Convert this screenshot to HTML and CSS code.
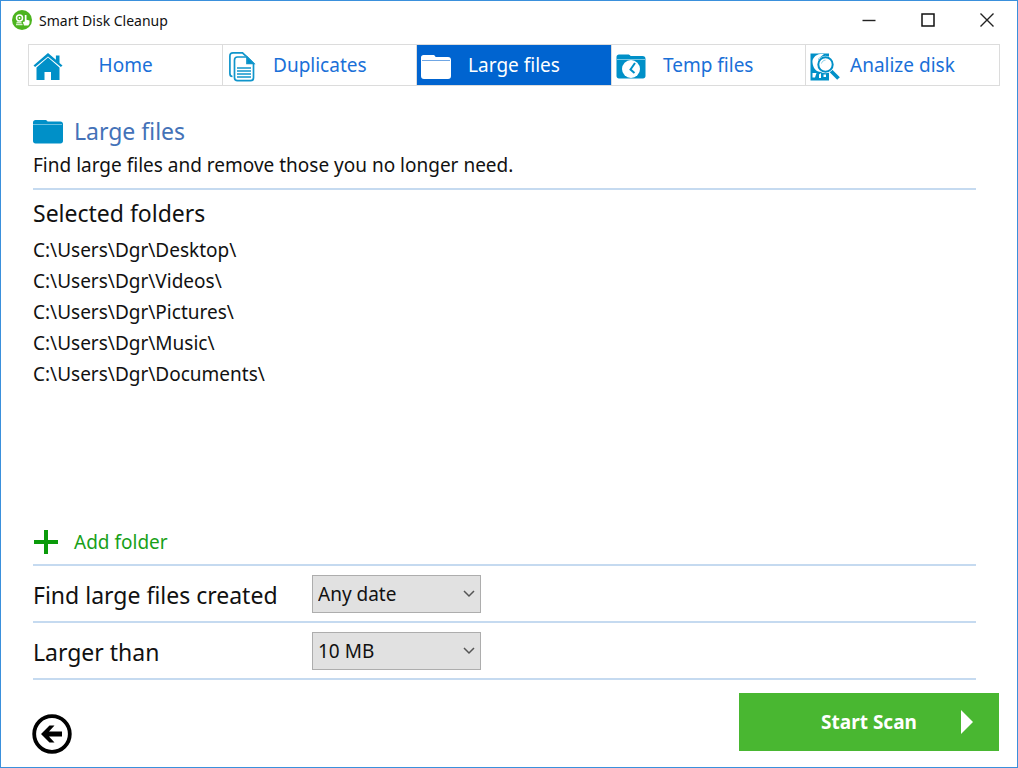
FILE: index.html
```html
<!DOCTYPE html>
<html lang="en">
<head>
    <meta charset="UTF-8">
    <meta name="viewport" content="width=device-width, initial-scale=1.0">
    <title>Smart Disk Cleanup</title>
    <link rel="stylesheet" href="styles.css">
</head>
<body>
<div class="window">
    <header class="titlebar">
        <svg class="app-logo" viewBox="0 0 20 20" width="20" height="20">
            <circle cx="10" cy="10" r="10" fill="#4cb41e"/>
            <circle cx="7.5" cy="8" r="3" fill="none" stroke="#fff" stroke-width="1.5"/>
            <circle cx="7.5" cy="8" r="0.9" fill="#fff"/>
            <path d="M4 14h6.500v1.300H4zM5 11.500l-1 2h6l-1-2" fill="#d4efc8"/>
            <path d="M12.800 5h1.700v4.800l3 0.800v3l-1.200 2h-4.300l-1.200-3.600 2-0.600z" fill="#fff"/>
        </svg>
        <span class="app-name">Smart Disk Cleanup</span>
        <div class="window-buttons">
            <button aria-label="Minimize"><svg viewBox="0 0 14 14" width="14" height="14"><path d="M0.5 7.5h13" fill="none" stroke="#222" stroke-width="1.4"/></svg></button>
            <button aria-label="Maximize"><svg viewBox="0 0 14 14" width="14" height="14"><path d="M1 1h12v12h-12z" fill="none" stroke="#111" stroke-width="1.5"/></svg></button>
            <button aria-label="Close"><svg viewBox="0 0 14 14" width="14" height="14"><path d="M0.5 0.5l13 13M13.5 0.5l-13 13" fill="none" stroke="#222" stroke-width="1.4"/></svg></button>
        </div>
    </header>

    <nav class="tabs">
        <a href="#home" class="tab">
            <svg viewBox="0 0 30 30" width="30" height="30" fill="#0090c8">
                <path d="M15 1L0.500 13.500l1.600 1.600L15 4.400l12.900 10.700 1.600-1.600-3-2.600V3.500h-3.600v4.300z"/>
                <path d="M15 5.500L3.500 15.500V28h8V20h6.500v8h8.500V15.500z"/>
            </svg>
            <span>Home</span>
        </a>
        <a href="#duplicates" class="tab">
            <svg viewBox="0 0 30 30" width="30" height="30" fill="none" stroke="#1095cb" stroke-width="1.7">
                <path d="M5.500 24.500C3.500 24.500 2.900 23.500 2.900 21.500V4C2.900 2 4 0.900 6 0.900h9.500l3.500 3.300"/>
                <path d="M10.500 5h9.500l6.500 6.500v14.200c0 2-1 3-3 3h-13c-2 0-3-1-3-3V8c0-2 1-3 3-3z" fill="#fff"/>
                <path d="M20 5l6.500 6.500H20z" fill="#0090c8"/>
                <path d="M10 16h14M10 19h14M10 22h14M10 25h14" stroke-width="1.4"/>
            </svg>
            <span>Duplicates</span>
        </a>
        <a href="#large" class="tab active">
            <svg viewBox="0 0 30 30" width="30" height="30">
                <path d="M0 5.500c0-1.500 1-2.500 2.500-2.500h9c2 0 2.500 0.500 3 2h12.500c2 0 3 1 3 3v16c0 2-1 3-3 3H3c-2 0-3-1-3-3z" fill="#fff"/>
                <path d="M1 8.500h28" stroke="#6fa6e4" stroke-width="1"/>
            </svg>
            <span>Large files</span>
        </a>
        <a href="#temp" class="tab">
            <svg viewBox="0 0 30 30" width="30" height="30">
                <path d="M0.500 5c0-1.500 1-2.500 2.500-2.500h8.500c2 0 2.500 0.500 3 1.500h12c2 0 3 1 3 3v17c0 1.500-1 2.500-2.500 2.500H3c-1.500 0-2.500-1-2.500-2.500z" fill="#0090c8"/>
                <path d="M1 7.500h28" stroke="#7cc8e4" stroke-width="1"/>
                <circle cx="15" cy="17" r="9" fill="#fff"/>
                <path d="M19 11l-4.500 6.500 4 3.500" fill="none" stroke="#0090c8" stroke-width="2"/>
            </svg>
            <span>Temp files</span>
        </a>
        <a href="#analize" class="tab">
            <svg viewBox="0 0 30 30" width="30" height="30">
                <path d="M0.500 1.500h18.500v27h-18.500z" fill="#0090c8"/>
                <path d="M2.500 10.500c-0.500-4 3-8 8-8.500h3.500L8 7v9l3 4C6 20 3 16 2.500 10.500z" fill="#fff"/>
                <path d="M2.500 21h4l-1.500 4.500h-2.500zM9 22.500l2-1.500v5H9zM13.500 22.500h2.500V25h-2.500z" fill="#fff"/>
                <path d="M20 17.500l8.500 9" stroke="#fff" stroke-width="6"/>
                <path d="M20.500 18.500l8 8" stroke="#0090c8" stroke-width="3.800"/>
                <circle cx="15.500" cy="12.500" r="8.800" fill="#fff"/>
                <circle cx="15.500" cy="12.500" r="7.200" fill="#fff" stroke="#0090c8" stroke-width="2"/>
                <path d="M11.500 11.500c0.500-2 2-3.300 4-3.300" fill="none" stroke="#8ccfe7" stroke-width="1"/>
            </svg>
            <span>Analize disk</span>
        </a>
    </nav>

    <main class="content">
        <div class="intro">
            <h1>
                <svg viewBox="0 0 30 24" width="30" height="24">
                    <path d="M0 2.500C0 1 1 0 2.500 0H12c1.500 0 2 0.500 2.500 1.500h13C29 1.500 30 2.500 30 4v17c0 1.500-1 2.500-2.500 2.500h-25C1 23.500 0 22.500 0 21z" fill="#0090c8"/>
                    <path d="M0 4.500h29" stroke="#6cc0e0" stroke-width="1"/>
                </svg>
                Large files
            </h1>
            <p>Find large files and remove those you no longer need.</p>
        </div>

        <section class="folders">
            <h2>Selected folders</h2>
            <ul>
                <li>C:\Users\Dgr\Desktop\</li>
                <li>C:\Users\Dgr\Videos\</li>
                <li>C:\Users\Dgr\Pictures\</li>
                <li>C:\Users\Dgr\Music\</li>
                <li>C:\Users\Dgr\Documents\</li>
            </ul>
            <button class="add-folder">
                <svg viewBox="0 0 26 26" width="26" height="26"><path d="M13 1v24M1 13h24" stroke="#0a9a0a" stroke-width="4"/></svg>
                Add folder
            </button>
        </section>

        <div class="option">
            <label for="created">Find large files created</label>
            <div class="select">
                <select id="created">
                    <option>Any date</option>
                </select>
                <svg viewBox="0 0 12 8" width="12" height="8"><path d="M1 1l5 5 5-5" fill="none" stroke="#555" stroke-width="1.500"/></svg>
            </div>
        </div>
        <div class="option">
            <label for="size">Larger than</label>
            <div class="select">
                <select id="size">
                    <option>10 MB</option>
                </select>
                <svg viewBox="0 0 12 8" width="12" height="8"><path d="M1 1l5 5 5-5" fill="none" stroke="#555" stroke-width="1.500"/></svg>
            </div>
        </div>
    </main>

    <footer class="footer">
        <button class="back" aria-label="Back">
            <svg viewBox="0 0 40 40" width="40" height="40">
                <circle cx="20" cy="20" r="17.800" fill="#fff" stroke="#000" stroke-width="3.800"/>
                <path d="M9 20l8.500-8.500h5L17 17.500h13v5H17l5.500 6h-5z" fill="#000"/>
            </svg>
        </button>
        <button class="start">
            <span>Start Scan</span>
            <svg viewBox="0 0 12 24" width="12" height="24"><path d="M0 0l12 12L0 24z" fill="#fff"/></svg>
        </button>
    </footer>
</div>
</body>
</html>
```
FILE: styles.css
```css
* {
    box-sizing: border-box;
}
body {
    font-family: "Noto Sans", "Open Sans", sans-serif;
    font-size: 19px;
    color: #111;
    background: #fff;
    margin: 0;
}
button {
    font-family: inherit;
    font-size: inherit;
    background: none;
    border: none;
    padding: 0;
    cursor: pointer;
}
svg {
    display: block;
    flex: none;
}
h1, h2, p, ul {
    margin: 0;
    padding: 0;
    font-weight: normal;
}
.window {
    display: flex;
    flex-direction: column;
    min-height: 100vh;
    border: 1px solid #3a90dc;
}
.titlebar {
    display: flex;
    align-items: center;
    height: 38px;
    padding: 0 1px 0 11px;
}
.app-name {
    margin-left: 7px;
    font-size: 14px;
}
.window-buttons {
    display: flex;
    margin-left: auto;
}
.window-buttons button {
    display: flex;
    align-items: center;
    justify-content: center;
    width: 59px;
    height: 36px;
}
.tabs {
    display: flex;
    margin: 5px 17px 0 27px;
    border: 1px solid #dcdcdc;
}
.tab {
    flex: 1;
    display: grid;
    grid-template-columns: 30px 1fr 30px;
    align-items: center;
    height: 40px;
    padding: 0 4px;
    color: #1a70d8;
    text-align: center;
    text-decoration: none;
    white-space: nowrap;
}
.tab svg {
    margin-top: 4px;
}
.tab + .tab {
    border-left: 1px solid #dcdcdc;
}
.tab.active {
    background: #0064d0;
    color: #fff;
}
.content {
    flex: 1;
    display: flex;
    flex-direction: column;
    margin: 28px 41px 0 32px;
}
.intro {
    padding-bottom: 6px;
    border-bottom: 2px solid #c5daf0;
}
h1 {
    display: flex;
    align-items: center;
    gap: 11px;
    font-size: 23px;
    line-height: 35px;
    color: #4472b8;
}
.intro p {
    line-height: 33px;
}
.folders {
    flex: 1;
    display: flex;
    flex-direction: column;
    padding: 4px 0 7px;
    border-bottom: 2px solid #c5daf0;
}
h2 {
    margin-bottom: 3px;
    font-size: 23px;
    line-height: 38px;
}
.folders ul {
    list-style: none;
}
.folders li {
    line-height: 31px;
}
.add-folder {
    display: flex;
    align-items: center;
    gap: 15px;
    margin-top: auto;
    align-self: flex-start;
    line-height: 30px;
    color: #18a018;
}
.option {
    display: flex;
    align-items: center;
    height: 57px;
    border-bottom: 2px solid #c5daf0;
}
.option label {
    width: 279px;
    padding-top: 3px;
    font-size: 23px;
}
.select {
    display: grid;
    align-items: center;
    width: 169px;
}
.select select, .select svg {
    grid-area: 1 / 1;
}
.select svg {
    justify-self: end;
    margin-right: 6px;
    pointer-events: none;
}
.select select {
    appearance: none;
    width: 100%;
    height: 38px;
    padding: 0 5px;
    font-family: inherit;
    font-size: 19px;
    color: #111;
    background: #e1e1e1;
    border: 1px solid #adadad;
    border-radius: 0;
}
.footer {
    display: flex;
    align-items: flex-end;
    justify-content: space-between;
    padding: 13px 18px 16px 31px;
}
.back {
    margin-bottom: -3px;
}
.start {
    display: grid;
    grid-template-columns: 1fr 12px;
    align-items: center;
    width: 260px;
    height: 58px;
    padding: 0 26px 0 38px;
    background: #49b731;
    color: #fff;
    font-weight: bold;
}
```
